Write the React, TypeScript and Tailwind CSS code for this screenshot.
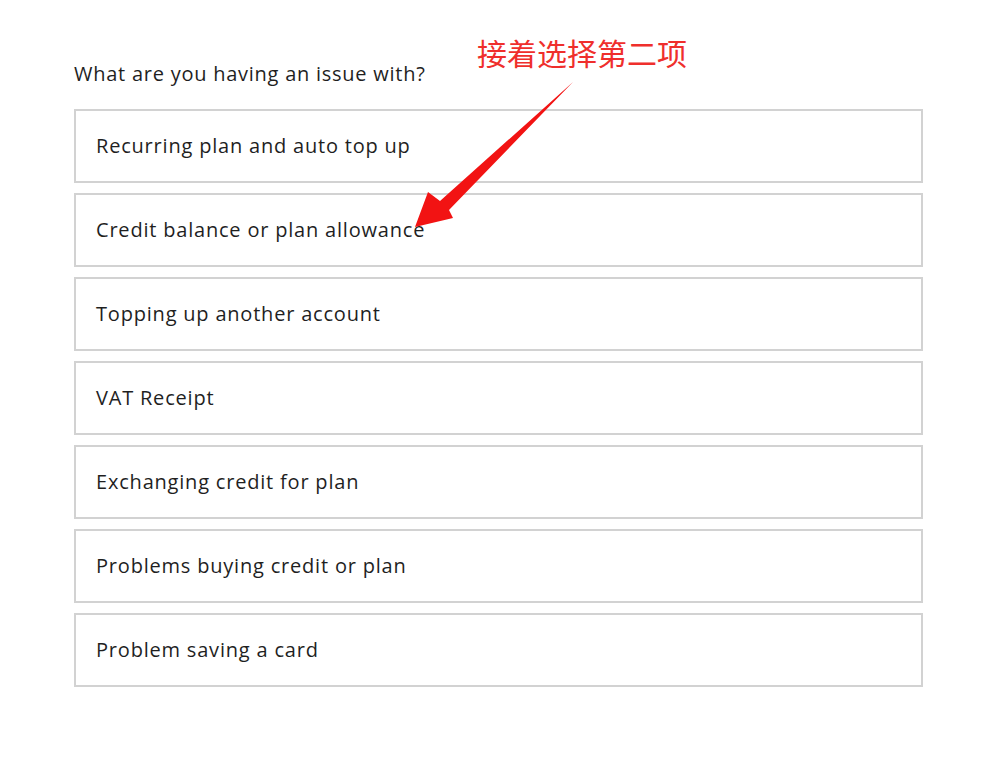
import React from 'react';

const issues = [
  'Recurring plan and auto top up',
  'Credit balance or plan allowance',
  'Topping up another account',
  'VAT Receipt',
  'Exchanging credit for plan',
  'Problems buying credit or plan',
  'Problem saving a card',
];

export default function App() {
  return (
    <div className="relative min-h-[761px] w-[1004px] bg-white" style={{ fontFamily: '"Open Sans", "Noto Sans", sans-serif' }}>
      <div className="pl-[74px] pt-[60px] w-[923px]">
        {/* Question */}
        <div className="text-[20px] leading-[28px] tracking-[0.75px] text-[#1f1f1f] mb-[21px]">What are you having an issue with?</div>

        {/* Options */}
        <div className="flex flex-col gap-[10px]">
          {issues.map((label) => (
            <div
              key={label}
              className="h-[74px] border-2 border-[#d2d2d2] flex items-center pl-5 text-[20px] tracking-[0.8px] text-[#1f1f1f]"
            >
              {label}
            </div>
          ))}
        </div>
      </div>

      {/* Annotation */}
      <div
        className="absolute left-[477px] top-[35px] text-[30px] leading-[34px] text-[#ef2f2c]"
        style={{ fontFamily: '"Noto Sans CJK SC", sans-serif' }}
      >
        接着选择第二项
      </div>
      <svg className="absolute left-0 top-0 pointer-events-none" width="1004" height="761" viewBox="0 0 1004 761">
        <path d="M573 82 L440 201 L428 192 L415 227 L453 218 L449 210 Z" fill="#f21313" />
      </svg>
    </div>
  );
}
